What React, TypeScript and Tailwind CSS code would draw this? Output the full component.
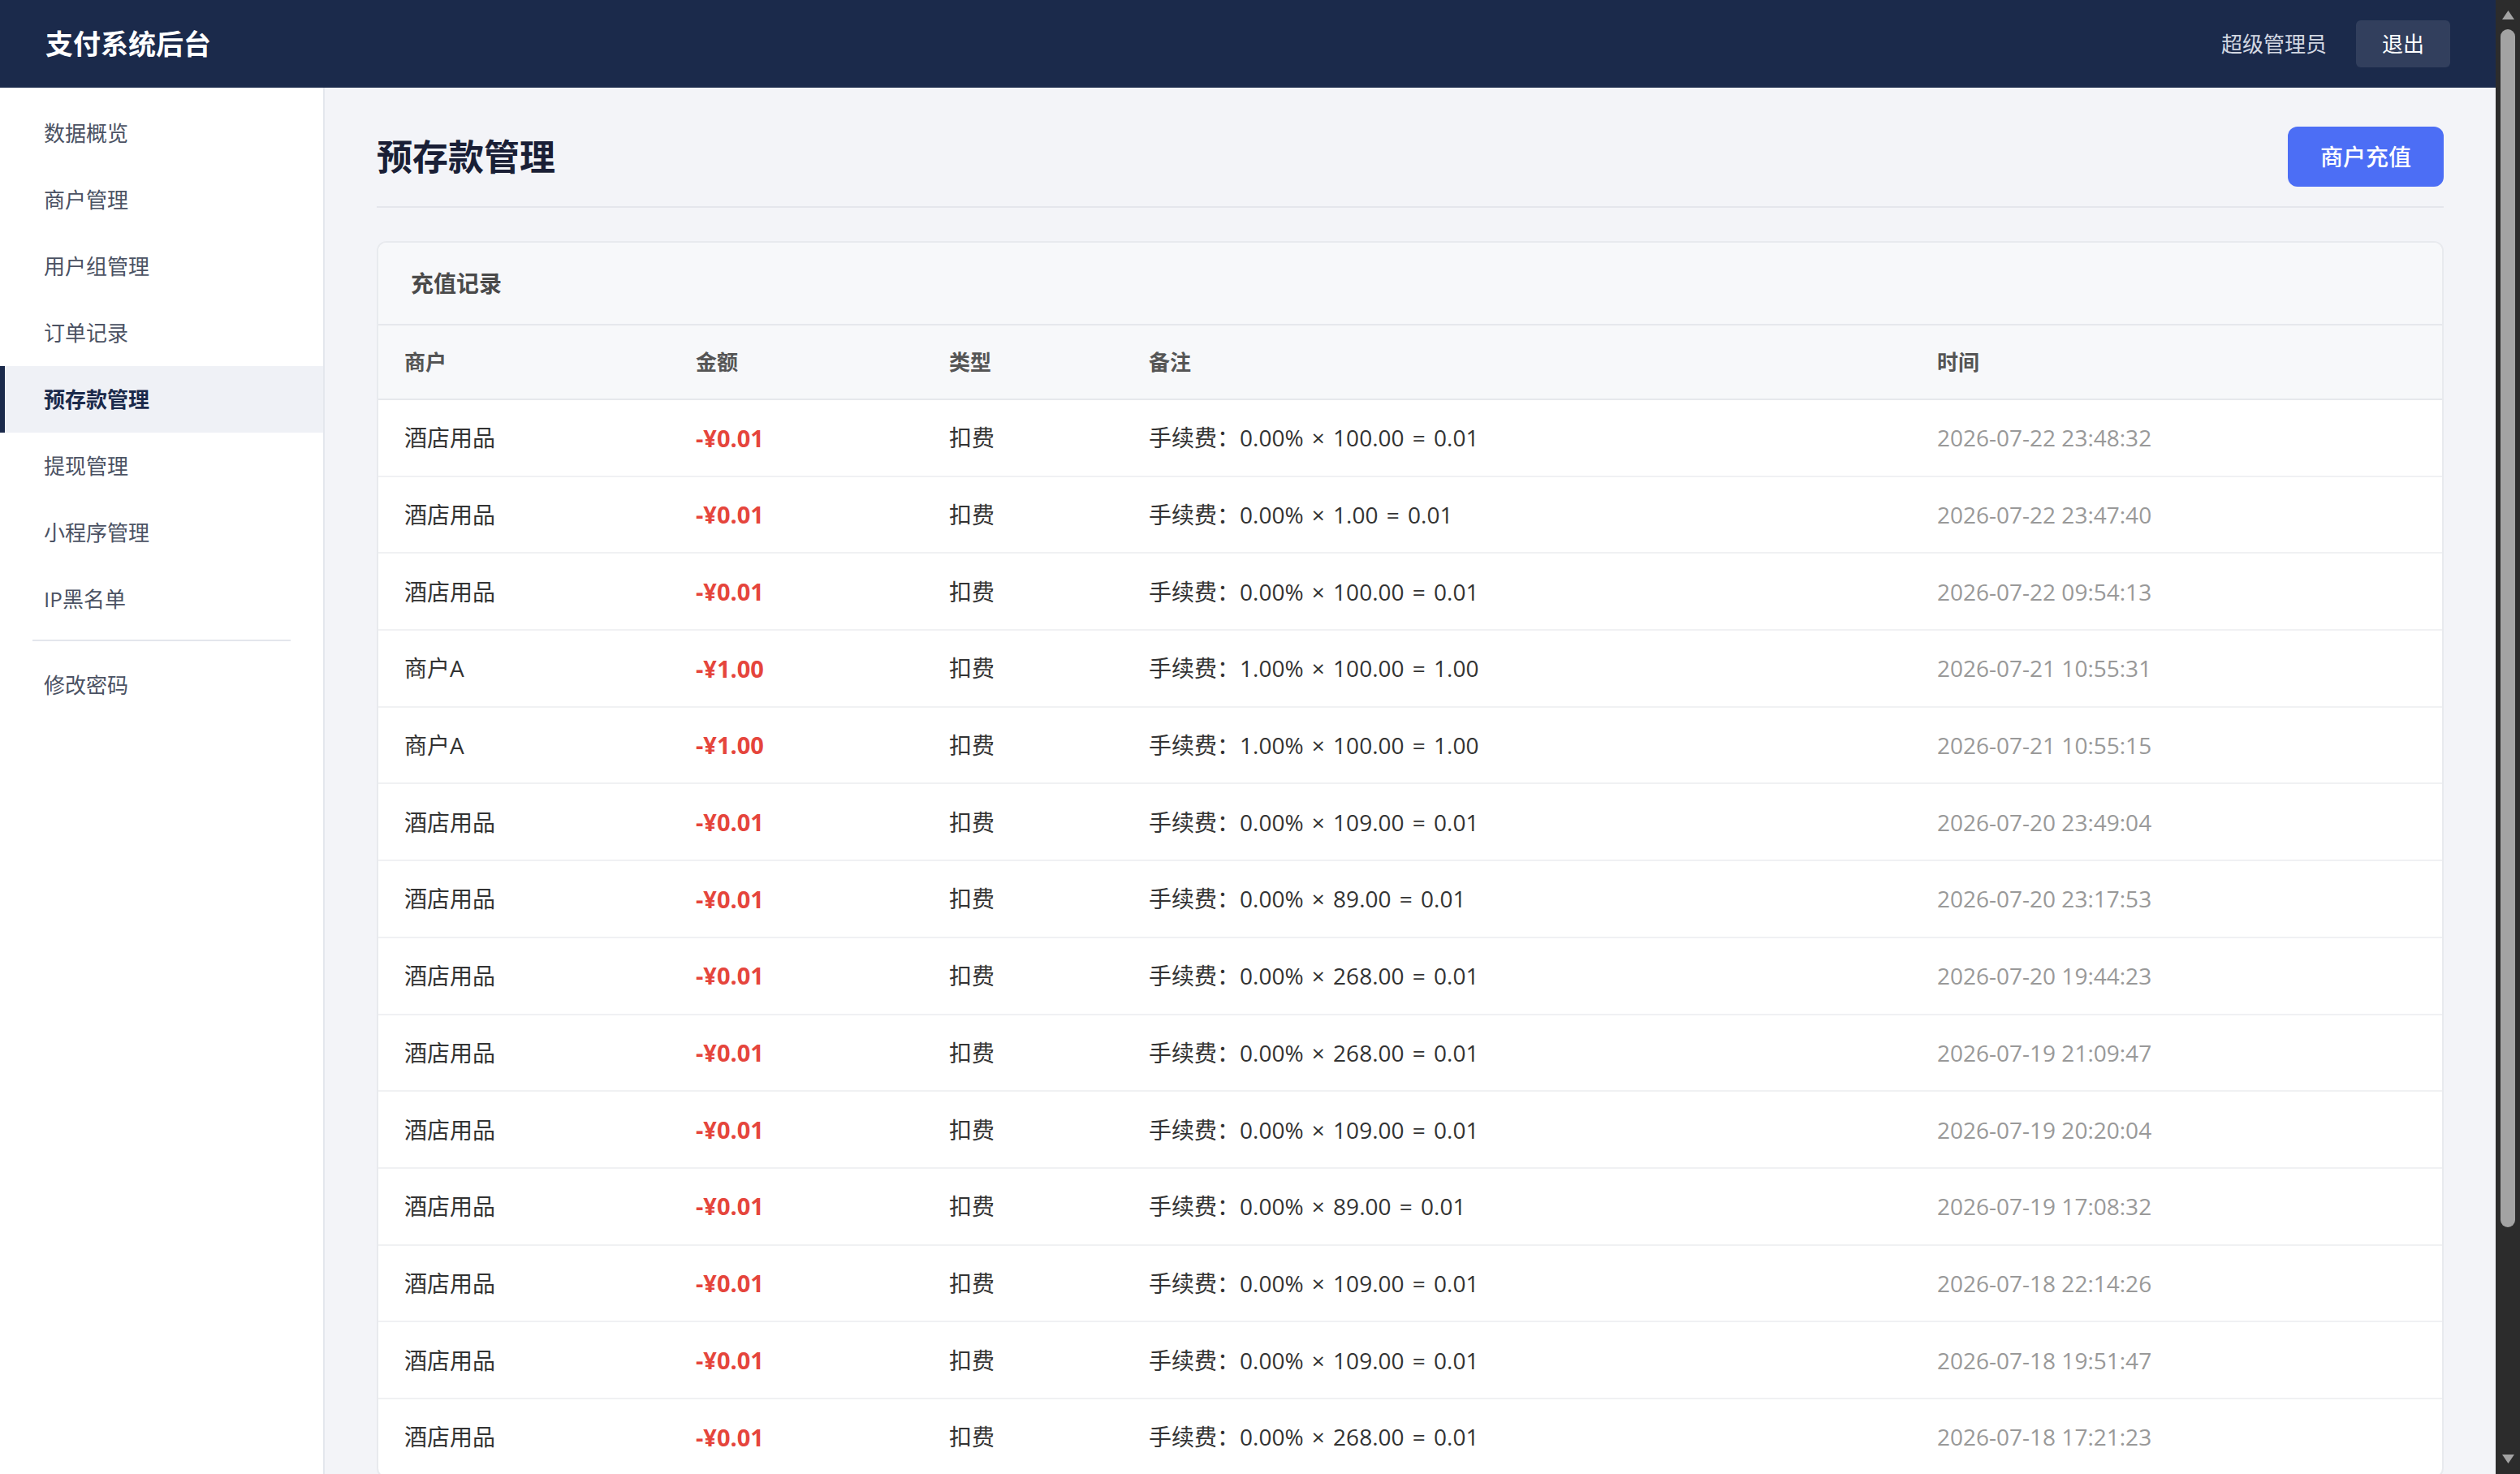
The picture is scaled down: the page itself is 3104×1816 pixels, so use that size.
import React from "react"

const navItems = ["数据概览", "商户管理", "用户组管理", "订单记录", "预存款管理", "提现管理", "小程序管理", "IP黑名单"]

const records = [
  { merchant: "酒店用品", amount: "-¥0.01", rate: "0.00%", base: "100.00", fee: "0.01", time: "2026-07-22 23:48:32" },
  { merchant: "酒店用品", amount: "-¥0.01", rate: "0.00%", base: "1.00", fee: "0.01", time: "2026-07-22 23:47:40" },
  { merchant: "酒店用品", amount: "-¥0.01", rate: "0.00%", base: "100.00", fee: "0.01", time: "2026-07-22 09:54:13" },
  { merchant: "商户A", amount: "-¥1.00", rate: "1.00%", base: "100.00", fee: "1.00", time: "2026-07-21 10:55:31" },
  { merchant: "商户A", amount: "-¥1.00", rate: "1.00%", base: "100.00", fee: "1.00", time: "2026-07-21 10:55:15" },
  { merchant: "酒店用品", amount: "-¥0.01", rate: "0.00%", base: "109.00", fee: "0.01", time: "2026-07-20 23:49:04" },
  { merchant: "酒店用品", amount: "-¥0.01", rate: "0.00%", base: "89.00", fee: "0.01", time: "2026-07-20 23:17:53" },
  { merchant: "酒店用品", amount: "-¥0.01", rate: "0.00%", base: "268.00", fee: "0.01", time: "2026-07-20 19:44:23" },
  { merchant: "酒店用品", amount: "-¥0.01", rate: "0.00%", base: "268.00", fee: "0.01", time: "2026-07-19 21:09:47" },
  { merchant: "酒店用品", amount: "-¥0.01", rate: "0.00%", base: "109.00", fee: "0.01", time: "2026-07-19 20:20:04" },
  { merchant: "酒店用品", amount: "-¥0.01", rate: "0.00%", base: "89.00", fee: "0.01", time: "2026-07-19 17:08:32" },
  { merchant: "酒店用品", amount: "-¥0.01", rate: "0.00%", base: "109.00", fee: "0.01", time: "2026-07-18 22:14:26" },
  { merchant: "酒店用品", amount: "-¥0.01", rate: "0.00%", base: "109.00", fee: "0.01", time: "2026-07-18 19:51:47" },
  { merchant: "酒店用品", amount: "-¥0.01", rate: "0.00%", base: "268.00", fee: "0.01", time: "2026-07-18 17:21:23" },
]

const cols = "grid grid-cols-[359px_312px_246px_971px_1fr]"

export default function App() {
  return (
    <div
      className="flex h-[1816px] w-full overflow-hidden bg-[#f3f4f8]"
      style={{ fontFamily: '"Open Sans", "Noto Sans CJK SC", sans-serif' }}
    >
      <div className="flex min-w-0 flex-1 flex-col">
        {/* top bar */}
        <header className="flex h-[108px] shrink-0 items-center justify-between bg-[#1b2a4b] px-[56px]">
          <h1 className="text-[34px] font-bold text-white">支付系统后台</h1>
          <div className="flex items-center gap-[36px]">
            <span className="text-[26px] text-[#d3d8e2]">超级管理员</span>
            <button className="h-[58px] rounded-[6px] bg-white/10 px-[32px] text-[26px] text-white">退出</button>
          </div>
        </header>

        <div className="flex min-h-0 flex-1">
          {/* sidebar */}
          <aside className="w-[400px] shrink-0 border-r-2 border-[#e4e7ed] bg-white pt-[15px]">
            {navItems.map((item) =>
              item === "预存款管理" ? (
                <div
                  key={item}
                  className="flex h-[82px] items-center border-l-[6px] border-[#1b2a4b] bg-[#eff1f6] pl-[48px] text-[26px] font-bold text-[#1b2a4b]"
                >
                  {item}
                </div>
              ) : (
                <div key={item} className="flex h-[82px] items-center pl-[54px] text-[26px] text-[#4b5263]">
                  {item}
                </div>
              ),
            )}
            <div className="mx-[40px] mb-[13px] mt-[9px] h-[2px] bg-[#e3e6ec]" />
            <div className="flex h-[82px] items-center pl-[54px] text-[26px] text-[#4b5263]">修改密码</div>
          </aside>

          {/* main */}
          <main className="min-w-0 flex-1 overflow-hidden px-[64px] pt-[48px]">
            <div className="flex items-center justify-between border-b-2 border-[#e4e6ec] pb-[24px]">
              <h2 className="text-[44px] font-bold text-[#1a1f36]">预存款管理</h2>
              <button className="h-[74px] w-[192px] rounded-[12px] bg-[#4c6ef5] text-[28px] font-medium text-white">
                商户充值
              </button>
            </div>

            <div className="mt-[41px] overflow-hidden rounded-[12px] border-2 border-[#e8eaee] bg-white">
              <div className="flex h-[102px] items-center border-b-2 border-[#e6e8ec] bg-[#f7f8fa] pl-[40px] text-[28px] font-bold text-[#4a4a4a]">
                充值记录
              </div>
              <div className={`${cols} h-[92px] items-center border-b-2 border-[#e6e8ec] bg-[#f7f8fa] text-[26px] font-bold text-[#555]`}>
                <div className="pl-[32px]">商户</div>
                <div className="pl-[32px]">金额</div>
                <div className="pl-[32px]">类型</div>
                <div className="pl-[32px]">备注</div>
                <div className="pl-[32px]">时间</div>
              </div>
              {records.map((r, i) => (
                <div key={i} className={`${cols} h-[94.7px] items-center border-b-2 border-[#f0f1f3] text-[28px] text-[#333]`}>
                  <div className="pl-[32px]">{r.merchant}</div>
                  <div className="pl-[32px] text-[29px] font-bold text-[#e5453c]">{r.amount}</div>
                  <div className="pl-[32px]">扣费</div>
                  <div className="pl-[32px] [word-spacing:3px]">
                    手续费：{r.rate} × {r.base} = {r.fee}
                  </div>
                  <div className="pl-[32px] text-[#999]">{r.time}</div>
                </div>
              ))}
            </div>
          </main>
        </div>
      </div>

      {/* window scrollbar */}
      <div className="flex w-[30px] shrink-0 flex-col items-center bg-[#2c2c2c] pb-[13px] pt-[13px]">
        <svg width="15" height="11" viewBox="0 0 15 11">
          <path d="M7.5 0 L15 11 L0 11 Z" fill="#a3a3a3" />
        </svg>
        <div className="mt-[12px] h-[1476px] w-[18px] rounded-full bg-[#a3a3a3]" />
        <div className="flex-1" />
        <svg width="15" height="11" viewBox="0 0 15 11">
          <path d="M0 0 L15 0 L7.5 11 Z" fill="#a3a3a3" />
        </svg>
      </div>
    </div>
  )
}
